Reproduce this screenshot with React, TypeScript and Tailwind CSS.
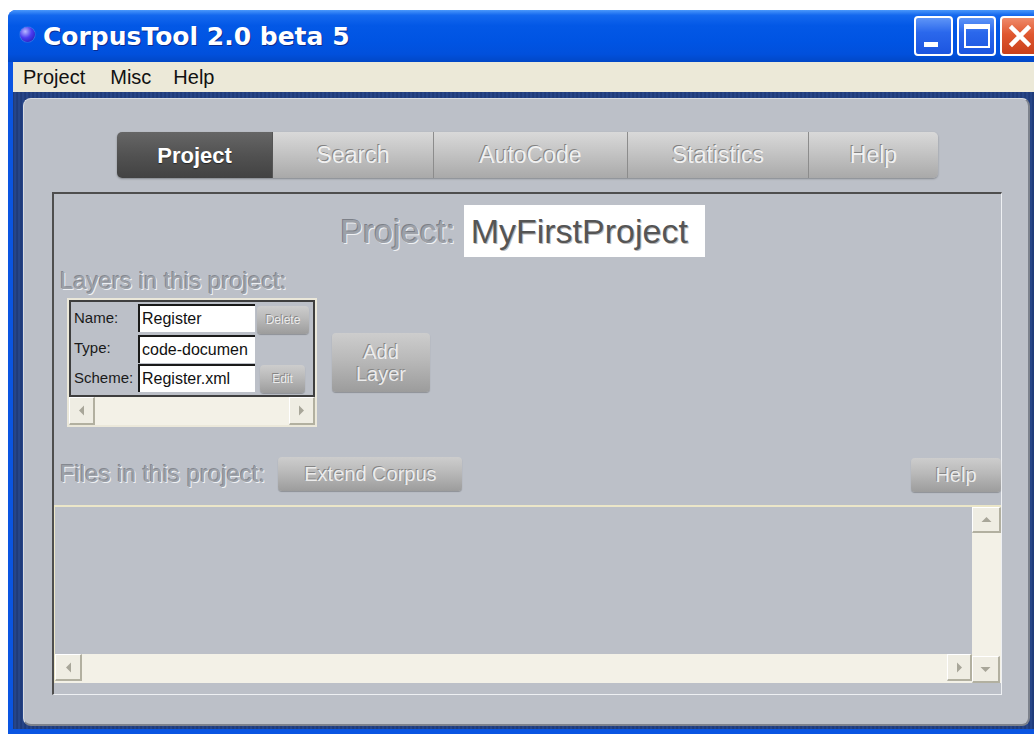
import React from "react";

type Dir = "l" | "r" | "u" | "d";

// Small grey triangle used on the scroll buttons
function Arrow({ dir }: { dir: Dir }) {
  const paths: Record<Dir, string> = {
    l: "M6 0 L1 5 L6 10 Z",
    r: "M1 0 L6 5 L1 10 Z",
    u: "M0 6 L5 1 L10 6 Z",
    d: "M0 1 L5 6 L10 1 Z",
  };
  const horiz = dir === "l" || dir === "r";
  return (
    <svg width={horiz ? 7 : 11} height={horiz ? 11 : 7} viewBox={horiz ? "0 0 7 10" : "0 0 10 7"}>
      <path d={paths[dir]} fill="#a8a699" />
    </svg>
  );
}

function ScrollBtn({ dir, className }: { dir: Dir; className: string }) {
  return (
    <div
      className={`flex shrink-0 items-center justify-center bg-[#efede3] border-t border-l border-t-white border-l-white border-r-2 border-b-2 border-r-[#b2b0a0] border-b-[#b2b0a0] ${className}`}
    >
      <Arrow dir={dir} />
    </div>
  );
}

function GrayButton({ className, children }: { className: string; children: React.ReactNode }) {
  return (
    <div
      className={`flex shrink-0 items-center justify-center rounded-[4px] bg-[linear-gradient(180deg,#cdcdcd_0%,#b9b9b9_45%,#9c9c9c_100%)] shadow-[0_1px_1px_rgba(0,0,0,0.25)] text-[#ececec] [text-shadow:-1px_-1px_0_#858585] ${className}`}
    >
      {children}
    </div>
  );
}

function Tab({ className, children }: { className: string; children: React.ReactNode }) {
  return (
    <div
      className={`flex items-center justify-center border-l border-l-[#8c8c8c] bg-[linear-gradient(180deg,#d9d9d9_0%,#c4c4c4_45%,#a9a9a9_100%)] text-[23px] text-[#f0f0f0] [text-shadow:-1px_-1px_0_#828282] ${className}`}
    >
      {children}
    </div>
  );
}

function LayerRow({
  label,
  value,
  button,
  buttonClass,
  rowClass,
}: {
  label: string;
  value: string;
  button?: string;
  buttonClass?: string;
  rowClass: string;
}) {
  return (
    <div className={`flex items-center ${rowClass}`}>
      <span className="w-[67px] pl-[3px] text-[15px] text-[#1a1a1a]">{label}</span>
      <div className="w-[117px] h-[28px] shrink-0 bg-white border-t-2 border-l-2 border-[#1a1a1a] flex items-center pl-[2px] overflow-hidden whitespace-nowrap text-[16px] text-[#111]">
        {value}
      </div>
      {button ? (
        <GrayButton className={`h-[28px] text-[12px] ${buttonClass ?? ""}`}>{button}</GrayButton>
      ) : null}
    </div>
  );
}

export default function App() {
  return (
    <div className="w-[1034px] h-[734px] overflow-hidden bg-white font-['Liberation_Sans',Arial,sans-serif]">
      {/* window */}
      <div className="ml-[8px] mt-[10px] w-[1042px] h-[724px] flex flex-col rounded-t-[8px] bg-[#0a55e2]">
        {/* title bar */}
        <div className="h-[52px] flex items-center rounded-t-[8px] pl-[12px] pr-[11px] bg-[linear-gradient(180deg,#4b98fb_0%,#1468ee_10%,#0358e6_30%,#0054e3_60%,#0150dc_85%,#0147c6_100%)]">
          <div className="w-[15px] h-[15px] mt-[-4px] rounded-full bg-[radial-gradient(circle_at_35%_30%,#b7b7ff_0%,#4b3cf0_45%,#1c14a8_100%)] shadow-[0_0_1px_#ffffff]" />
          <span className="ml-[8px] font-['DejaVu_Sans',sans-serif] font-bold text-[25px] leading-none text-white [text-shadow:1px_1px_0_#0b2d8f]">
            CorpusTool 2.0 beta 5
          </span>
          <div className="ml-auto flex items-center gap-[4px]">
            <div className="w-[39px] h-[40px] rounded-[4px] border-2 border-white bg-[linear-gradient(180deg,#5e95f7_0%,#2b68ec_40%,#1c55e0_100%)] relative">
              <div className="absolute left-[8px] bottom-[7px] w-[14px] h-[5px] bg-white" />
            </div>
            <div className="w-[39px] h-[40px] rounded-[4px] border-2 border-white bg-[linear-gradient(180deg,#5e95f7_0%,#2b68ec_40%,#1c55e0_100%)] flex items-center justify-center">
              <div className="w-[26px] h-[24px] border-2 border-t-[5px] border-white" />
            </div>
            <div className="w-[39px] h-[40px] rounded-[4px] border-2 border-white bg-[linear-gradient(180deg,#ef8a6a_0%,#e0572f_45%,#c9401c_100%)] flex items-center justify-center">
              <svg width="24" height="24" viewBox="0 0 24 24">
                <path d="M4 4 L20 20 M20 4 L4 20" stroke="white" strokeWidth="4.5" strokeLinecap="square" />
              </svg>
            </div>
          </div>
        </div>

        {/* window body */}
        <div className="flex-1 flex flex-col px-[5px] pb-[5px]">
          {/* menu bar */}
          <div className="h-[30px] flex items-center bg-[#ece9d8] text-[20px] text-[#111]">
            <span className="ml-[10px]">Project</span>
            <span className="ml-[25px]">Misc</span>
            <span className="ml-[22px]">Help</span>
          </div>

          {/* dark surround */}
          <div className="flex-1 pt-[6px] pl-[10px] pb-[3px] bg-[#203d7c] bg-[repeating-linear-gradient(90deg,#1b3573_0px,#2a4a8e_2px,#1d3876_4px)]">
            {/* main panel */}
            <div className="w-[1007px] h-[628px] flex flex-col rounded-[8px] bg-[#bcc0c8] border-t border-l border-t-[#d9dce1] border-l-[#d9dce1] border-b-2 border-r-2 border-b-[#7d828c] border-r-[#7d828c]">
              {/* tabs */}
              <div className="ml-[93px] mt-[33px] h-[46px] w-[821px] flex rounded-[5px] shadow-[0_1px_2px_rgba(0,0,0,0.3)]">
                <div className="w-[155px] flex items-center justify-center rounded-l-[5px] bg-[linear-gradient(180deg,#666666_0%,#525252_50%,#424242_100%)] font-bold text-[22px] text-white [text-shadow:0_1px_1px_rgba(0,0,0,0.5)]">
                  Project
                </div>
                <Tab className="w-[161px] border-l-[#555555]">Search</Tab>
                <Tab className="w-[194px]">AutoCode</Tab>
                <Tab className="w-[181px]">Statistics</Tab>
                <Tab className="w-[130px] rounded-r-[5px]">Help</Tab>
              </div>

              {/* project frame */}
              <div className="ml-[28px] mt-[14px] w-[950px] h-[503px] flex flex-col border-t-2 border-l-2 border-t-[#4e4e4e] border-l-[#4e4e4e] border-r border-b border-r-[#eef0f3] border-b-[#eef0f3]">
                {/* project name */}
                <div className="mt-[11px] h-[52px] flex items-center justify-center gap-[8px] pr-[10px]">
                  <span className="text-[34px] text-[#9da1a8] [text-shadow:-1px_-1px_0_rgba(95,99,107,0.7),1px_1px_0_#eef0f3]">
                    Project:
                  </span>
                  <div className="w-[241px] h-[52px] bg-white flex items-center pl-[7px] text-[34px] text-[#555555] [text-shadow:1px_1px_0_#bbbbbb]">
                    MyFirstProject
                  </div>
                </div>

                {/* layers */}
                <div className="mt-[10px] h-[28px] pl-[6px] text-[24px] leading-[28px] text-[#9da1a8] [text-shadow:-1px_-1px_0_rgba(95,99,107,0.6),1px_1px_0_#eef0f3]">
                  Layers in this project:
                </div>
                <div className="mt-[3px] h-[129px] flex items-start pl-[13px]">
                  <div className="w-[250px] h-[129px] flex flex-col bg-[#ebe8da] p-[2px]">
                    <div className="h-[97px] flex flex-col border-2 border-[#3e3e3e] bg-[#bcc0c8]">
                      <LayerRow label="Name:" value="Register" button="Delete" buttonClass="w-[52px] ml-[2px] mt-[3px]" rowClass="h-[32px]" />
                      <LayerRow label="Type:" value="code-documen" rowClass="h-[29px]" />
                      <LayerRow label="Scheme:" value="Register.xml" button="Edit" buttonClass="w-[45px] ml-[5px] mt-[2px]" rowClass="h-[30px]" />
                    </div>
                    <div className="flex-1 flex justify-between bg-[#f3f1e7]">
                      <ScrollBtn dir="l" className="w-[26px] h-[28px]" />
                      <ScrollBtn dir="r" className="w-[26px] h-[28px]" />
                    </div>
                  </div>
                  <GrayButton className="ml-[15px] mt-[35px] w-[98px] h-[59px] flex-col text-[20px] leading-[22px]">
                    <span>Add</span>
                    <span>Layer</span>
                  </GrayButton>
                </div>

                {/* files */}
                <div className="mt-[29px] h-[36px] flex items-center pl-[6px]">
                  <span className="text-[24px] text-[#9da1a8] [text-shadow:-1px_-1px_0_rgba(95,99,107,0.6),1px_1px_0_#eef0f3]">
                    Files in this project:
                  </span>
                  <GrayButton className="ml-[13px] w-[184px] h-[34px] text-[20px]">Extend Corpus</GrayButton>
                  <GrayButton className="ml-auto mt-[1px] w-[90px] h-[34px] text-[20px]">Help</GrayButton>
                </div>

                <div className="mt-[13px] h-[178px] flex border-t-2 border-l border-t-[#ebe6c8] border-l-[#ebe6c8]">
                  <div className="flex-1 flex flex-col">
                    <div className="flex-1 bg-[#bcc0c8]" />
                    <div className="h-[29px] flex justify-between bg-[#f3f1e7]">
                      <ScrollBtn dir="l" className="w-[27px] h-[27px]" />
                      <ScrollBtn dir="r" className="w-[25px] h-[27px]" />
                    </div>
                  </div>
                  <div className="w-[29px] flex flex-col justify-between bg-[#f3f1e7]">
                    <ScrollBtn dir="u" className="w-[29px] h-[26px]" />
                    <ScrollBtn dir="d" className="w-[28px] h-[27px]" />
                  </div>
                </div>
              </div>
            </div>
          </div>
        </div>
      </div>
    </div>
  );
}
